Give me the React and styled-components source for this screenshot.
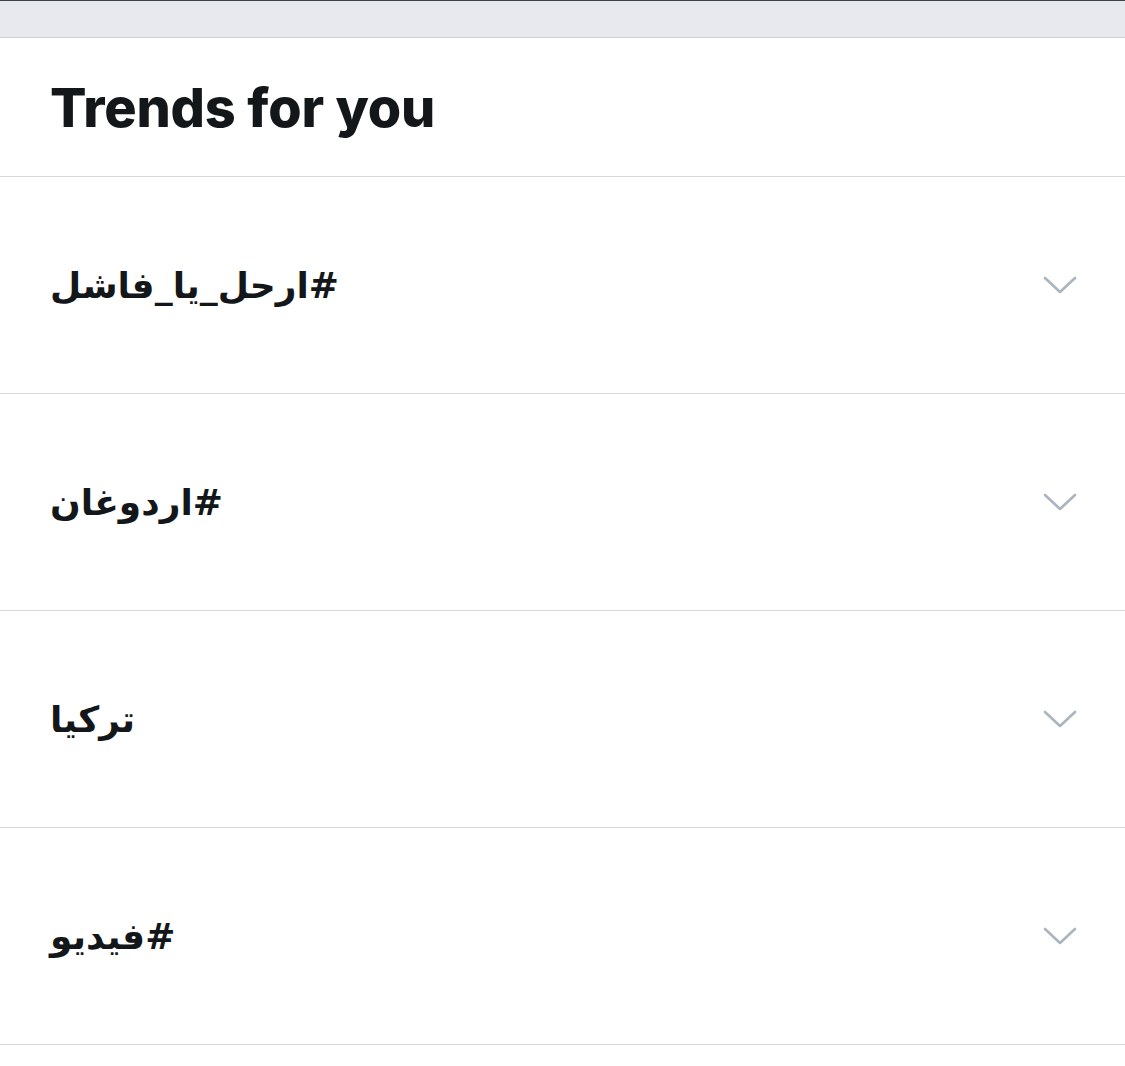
import React from 'react';
import styled, { createGlobalStyle } from 'styled-components';

const GlobalStyle = createGlobalStyle`
  html, body {
    margin: 0;
    padding: 0;
    background: #ffffff;
  }
  body {
    font-family: Inter, "Liberation Sans", sans-serif;
    color: #14171a;
  }
`;

const Page = styled.div`
  width: 1125px;
  min-height: 1066px;
  background: #ffffff;
`;

const TopBar = styled.div`
  height: 36px;
  background: #e7e9ee;
  border-top: 1px solid #3b4249;
  border-bottom: 1px solid #cfd0d3;
`;

const Header = styled.div`
  height: 139px;
  box-sizing: border-box;
  display: flex;
  align-items: center;
  padding: 0 50px;
  border-bottom: 1px solid #d9d9d9;
`;

const Title = styled.h2`
  margin: 0;
  font-size: 54px;
  font-weight: 800;
  letter-spacing: -0.2px;
  color: #14171a;
  padding-top: 1px;
`;

const List = styled.div`
  display: flex;
  flex-direction: column;
`;

const Row = styled.div`
  height: 217px;
  box-sizing: border-box;
  display: flex;
  align-items: center;
  justify-content: space-between;
  padding: 0 48px 0 50px;
  border-bottom: 1px solid #d9d9d9;
`;

const Tag = styled.span`
  font-family: "DejaVu Sans", "Noto Sans", sans-serif;
  font-size: 36px;
  font-weight: 700;
  color: #14171a;
  unicode-bidi: plaintext;
  text-align: left;
`;

const Chevron = styled.svg`
  width: 34px;
  height: 20px;
  flex-shrink: 0;
`;

const trends = ['#ارحل_يا_فاشل', '#اردوغان', 'تركيا', '#فيديو'];

const ChevronIcon = () => (
  <Chevron viewBox="0 0 34 20">
    <path
      d="M2 3 L17 17 L32 3"
      fill="none"
      stroke="#aab5c0"
      strokeWidth="2.6"
      strokeLinecap="round"
      strokeLinejoin="round"
    />
  </Chevron>
);

const App = () => (
  <Page>
    <GlobalStyle />
    <TopBar />
    <Header>
      <Title>Trends for you</Title>
    </Header>
    <List>
      {trends.map((t) => (
        <Row key={t}>
          <Tag dir="rtl">{t}</Tag>
          <ChevronIcon />
        </Row>
      ))}
    </List>
  </Page>
);

export default App;
